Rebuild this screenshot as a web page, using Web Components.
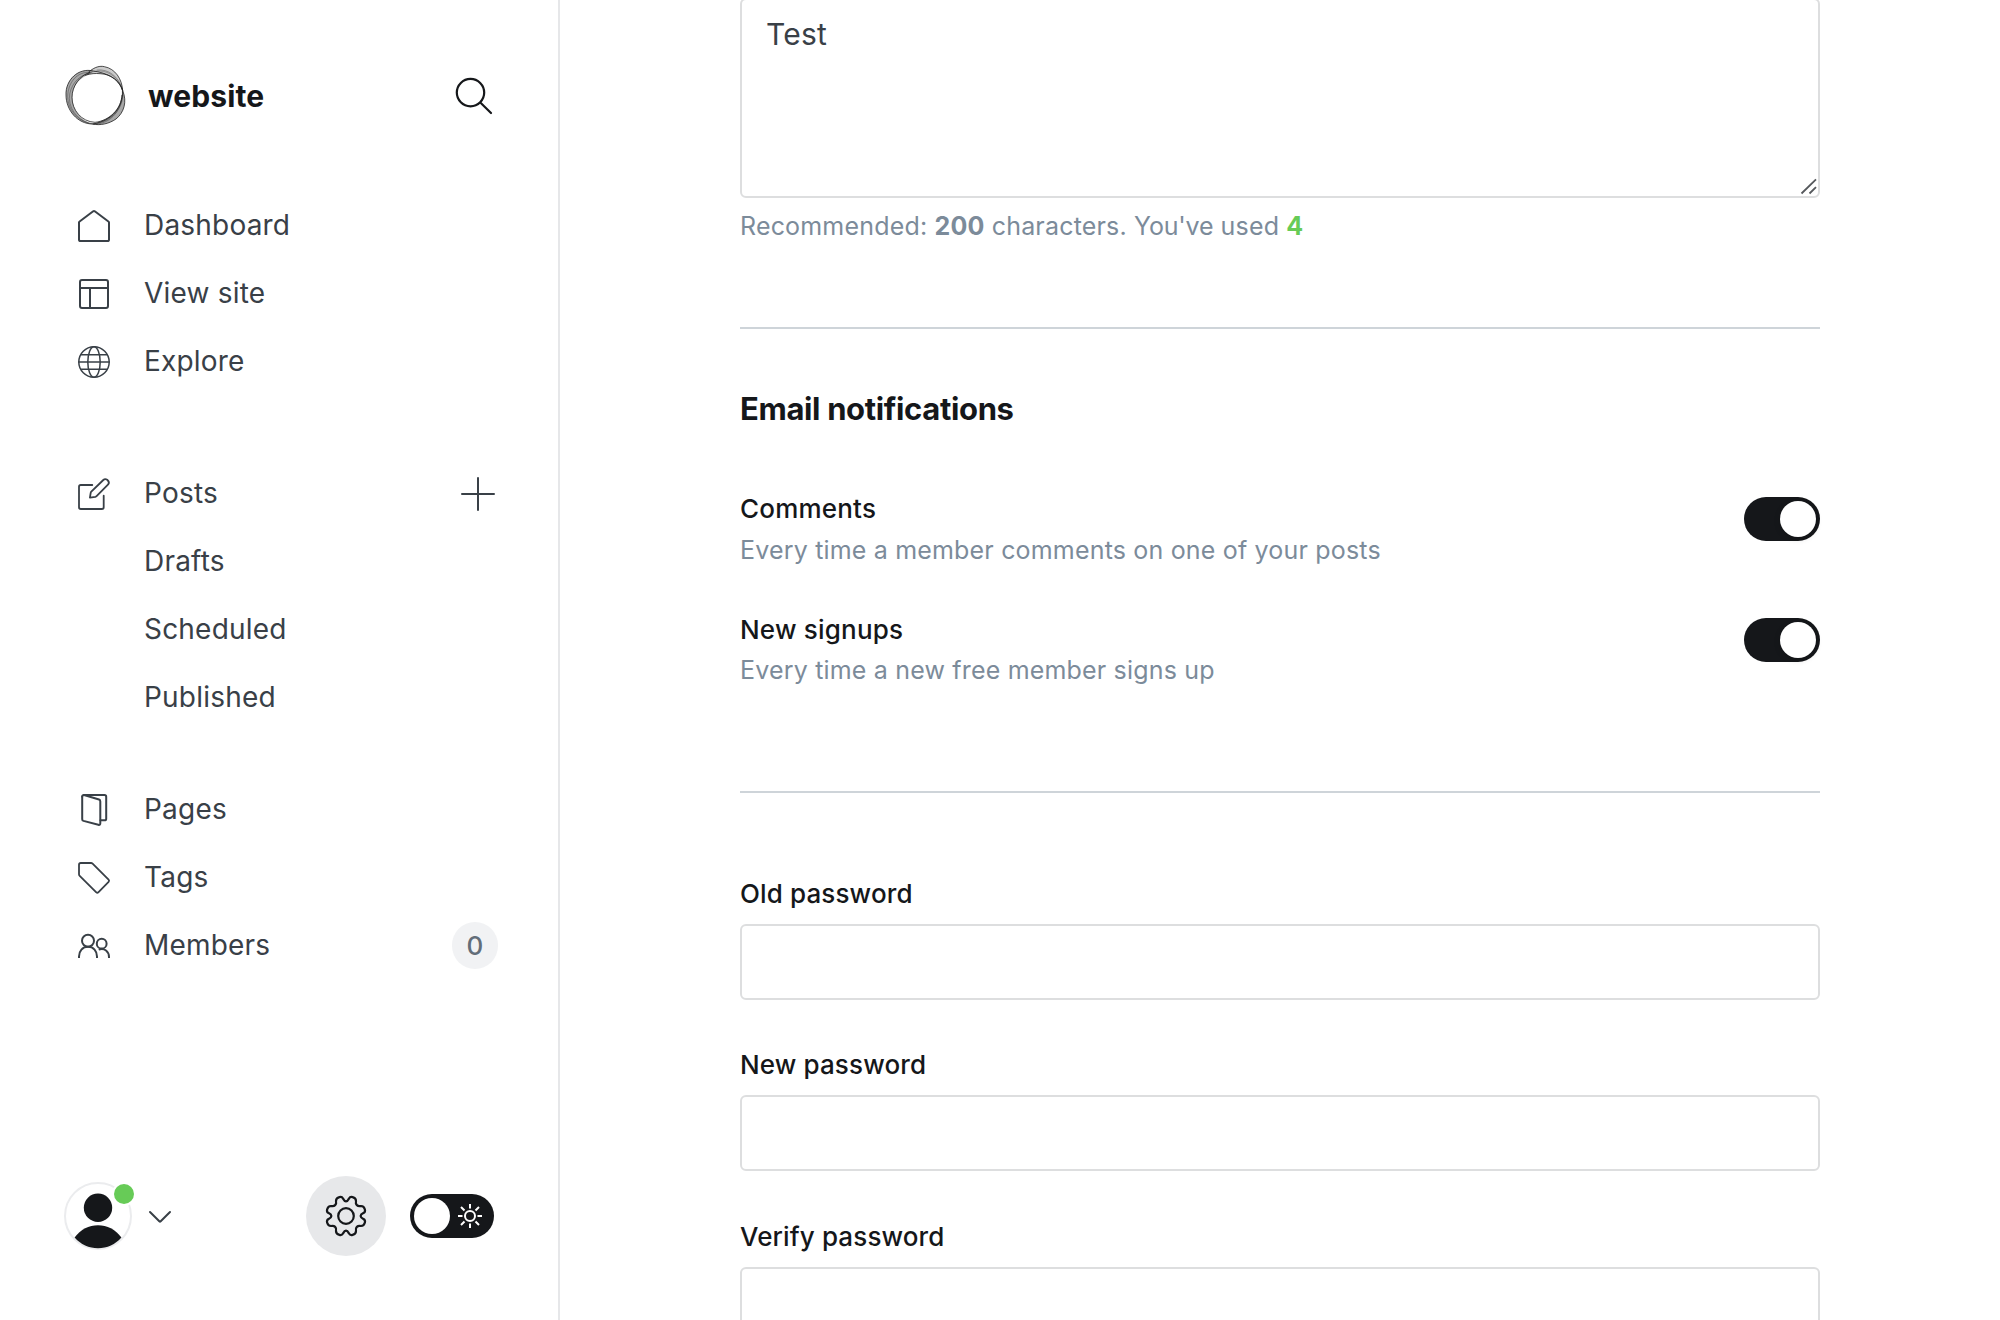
<!DOCTYPE html>
<html lang="en">
<head>
<meta charset="utf-8">
<title>Staff settings</title>
<style>
  html, body { margin: 0; height: 1320px; overflow: hidden; background: #fff; }
  body { font-family: Inter, "Liberation Sans", sans-serif; color: #15171a; }
</style>
</head>
<body>
<admin-app></admin-app>
<script>
const define = (name, html, setup) => {
  const template = document.createElement('template');
  template.innerHTML = `<style>*{box-sizing:border-box}svg{display:block;overflow:visible}</style>${html}`;
  customElements.define(name, class extends HTMLElement {
    constructor() {
      super();
      this.attachShadow({ mode: 'open' }).append(template.content.cloneNode(true));
    }
    connectedCallback() { if (setup) setup(this, this.shadowRoot); }
  });
};

/* Line icons, drawn in a 32px box */
const ICONS = {
  dashboard: '<path d="M1 12.6Q1 11.9 1.6 11.5L15.2 1.3Q16 .8 16.8 1.3L30.400 11.500Q31 11.900 31 12.600V29.400Q31 31 29.400 31H2.600Q1 31 1 29.400Z"/>',
  layout: '<rect x="2" y="2" width="28" height="28" rx="2"/><path d="M2 10H30M12 10V30"/>',
  globe: '<g stroke-width="1.5"><circle cx="16" cy="16" r="15.200"/><ellipse cx="16" cy="16" rx="6.200" ry="15.200"/><path d="M.800 16H31.200M3 8.700H29M3 23.300H29"/></g>',
  edit: '<g stroke-width="1.800"><path d="M14.300 7H2.700Q1 7 1 8.700V29.300Q1 31 2.700 31H24Q25.700 31 25.700 29.300V17.700"/><path d="M11.900 19.600L12.700 14.800Q12.800 14.200 13.300 13.700L25.300 2Q27 .400 29.200 1.700Q32 4 30.200 6.400L18.600 18.100Q18.100 18.600 17.400 18.800Z"/></g>',
  pages: '<path d="M4.200 2.700Q4.200 1 6 1H26.500Q28.200 1 28.200 2.700V24.700Q28.200 26.300 26.500 26.300H22.500"/><path d="M6 1L21 5.500Q22.300 6 22.300 7.400V29.300Q22.300 31.400 20.300 30.800L5.500 26.900Q4.200 26.500 4.200 25.200V2.700"/>',
  tag: '<path stroke-width="1.800" d="M2.700 1H13Q13.900 1 14.600 1.700L30.600 17.700Q31.600 18.800 30.600 19.800L20.300 30.300Q19.300 31.300 18.300 30.300L1.700 13.900Q1 13.200 1 12.300V2.700Q1 1 2.700 1Z"/>',
  members: '<g stroke-linecap="butt"><circle cx="10" cy="10.700" r="6"/><path d="M1 28V26.500C1 21 4.500 16.800 10 16.800S19 21 19 26.500V28"/><circle cx="23.700" cy="13.700" r="4.900"/><path d="M20.700 19.600C26.500 17.500 31 21.500 31 27V28"/></g>'
};

define('line-icon', `
  <style>:host{display:block;flex:none;width:32px;height:32px}</style>
  <svg width="32" height="32" viewBox="0 0 32 32" fill="none" stroke="#394047" stroke-width="2" stroke-linecap="round" stroke-linejoin="round"></svg>`,
  (host, root) => { root.querySelector('svg').innerHTML = ICONS[host.getAttribute('name')] || ''; });

define('nav-item', `
  <style>
    :host{display:flex;align-items:center;height:68px;padding-right:62px;color:#394047;
      font-size:28px;line-height:36px;letter-spacing:.2px}
    .icon{width:66px;padding-top:2px;flex:none}
    .label{flex:1}
  </style>
  <div class="icon"></div><span class="label"><slot></slot></span><slot name="end"></slot>`,
  (host, root) => {
    const name = host.getAttribute('icon');
    if (name) root.querySelector('.icon').innerHTML = `<line-icon name="${name}"></line-icon>`;
  });

define('nav-group', `
  <style>:host{display:flex;flex-direction:column}</style><slot></slot>`);

define('site-logo', `
  <style>:host{display:block;width:64px;height:64px}</style>
  <svg width="64" height="64" viewBox="42 42 192 192" fill="none">
    <g fill="#6c6c6c" fill-opacity=".6">
      <path d="M116 66C135 50 150 47 163 50C196 56 216 87 218 122C210 95 185 72 150 71C136 70 124 72 105 76Z" fill-opacity=".35"/>
      <path d="M218 122C232 155 222 188 198 207C176 222 150 227 128 222C165 212 210 190 216 142Z"/>
      <path d="M130 63C85 52 46 90 48 135C48 180 82 222 128 222C95 213 66 180 67 140C67 108 90 82 120 72Z"/>
    </g>
    <g stroke="#161616" stroke-opacity=".8" stroke-width="2.800">
      <path d="M116 66C135 50 150 47 163 50C196 56 216 87 218 122C232 155 222 188 198 207C176 222 150 227 128 222C82 222 48 180 48 135C46 90 85 52 130 63C165 68 205 82 218 122"/>
      <path d="M105 76C124 70 136 70 150 71C185 72 210 95 218 122C218 170 190 212 128 222"/>
      <path d="M120 67C90 76 66 108 66 142C66 180 94 215 135 217C180 212 214 175 216 135"/>
    </g>
    <g stroke="#222" stroke-opacity=".6" stroke-width="1.800">
      <path d="M122 67C80 64 54 98 53 140C54 182 86 217 130 221C176 220 224 180 218 122C208 86 180 64 150 63C136 63 124 66 112 72"/>
      <path d="M118 70C84 76 58 108 58 146C60 186 92 218 132 223C184 222 220 178 217 118C206 80 176 56 140 60"/>
    </g>
  </svg>`);

define('count-badge', `
  <style>:host{display:flex;align-items:center;justify-content:center;width:46px;height:47px;margin-right:-2px;padding-top:1px;
    border-radius:24px;background:#f1f2f4;color:#626d79;font-size:26px;font-weight:500;line-height:32px;letter-spacing:0}</style>
  <slot></slot>`);

define('user-avatar', `
  <style>:host{display:block;width:68px;height:68px}</style>
  <svg width="68" height="68" viewBox="0 0 68 68">
    <circle cx="34" cy="34" r="33" fill="#fff" stroke="#ebecee" stroke-width="2"/>
    <circle cx="34" cy="25.700" r="14.200" fill="#15171a"/>
    <path d="M10.600 55.500C16.500 47.500 25 43.300 34 43.300S51.500 47.500 57.400 55.500C51.500 62.500 43 66.200 34 66.200S16.500 62.500 10.600 55.500Z" fill="#15171a"/>
    <circle cx="60" cy="12" r="12" fill="#fff"/><circle cx="60" cy="12" r="10" fill="#67cb57"/>
  </svg>`);

define('gear-button', `
  <style>:host{display:flex;align-items:center;justify-content:center;width:80px;height:80px;border-radius:50%;background:#e7e8ea}</style>
  <svg width="40" height="40" viewBox="-20 -20 40 40" fill="none" stroke="#15171a" stroke-width="2.200" stroke-linejoin="round">
    <circle r="7.800"/>
    <path/>
  </svg>`,
  (host, root) => {
    /* One quadrant of the cog as bezier points, repeated four times */
    const q = [[0,-14.6],[1.5,-14.6],[2.1,-15.8],[3,-17.5],[3.9,-19.2],[5,-19.3],[6.6,-18.9],[8.6,-18.4],[10,-17.4],[10,-15],
      [9.2,-11.4],[11.4,-9.2],[15,-10],[17.4,-10],[18.4,-8.6],[18.9,-6.6],[19.3,-5],[19.2,-3.9],[17.5,-3],[15.8,-2.1],[14.6,-1.5],[14.6,0]];
    let d = `M${q[0]}`, pts = q.slice(1);
    for (let k = 0; k < 4; k++) {
      for (let i = 0; i < pts.length; i += 3) d += 'C' + pts.slice(i, i + 3).join(' ');
      pts = pts.map(([x, y]) => [-y, x]);
    }
    root.querySelector('path').setAttribute('d', d + 'Z');
  });

define('theme-toggle', `
  <style>:host{display:flex;align-items:center;justify-content:space-between;width:84px;height:44px;padding:0 12px 0 4px;border-radius:22px;background:#15171a}
  i{width:36px;height:36px;border-radius:50%;background:#fff}</style>
  <i></i>
  <svg width="24" height="24" viewBox="-12 -12 24 24" fill="none" stroke="#fff" stroke-width="2">
    <circle r="5"/><path d="M0-12V-7.500M0 7.500V12M-12 0H-7.500M7.500 0H12M-9-9L-5.500-5.500M9-9L5.500-5.500M-9 9L-5.500 5.500M9 9L5.500 5.500"/>
  </svg>`);

define('side-bar', `
  <style>
    :host{display:flex;flex-direction:column;width:560px;height:1320px;flex:none;border-right:2px solid #e6e7e9;padding:64px 0 64px 78px}
    header{display:flex;align-items:center;height:64px;margin-left:-14px;padding-right:66px}
    h1{flex:1;margin:0 0 0 20px;font-size:30px;line-height:40px;font-weight:700;letter-spacing:.12px}
    nav{display:flex;flex-direction:column;gap:64px;margin-top:63px}
    nav-group + nav-group + nav-group{margin-top:-20px}
    footer{display:flex;align-items:center;height:80px;margin:auto 64px 0 -14px}
    .caret{flex:1;margin-left:17px;padding-top:1px}
    theme-toggle{margin-left:24px}
  </style>
  <header>
    <site-logo></site-logo><h1>website</h1>
    <svg width="36" height="36" viewBox="0 0 36 36" fill="none" stroke="#15171a" stroke-width="2.200" stroke-linecap="round">
      <circle cx="14.500" cy="14.600" r="13.700"/><path d="M24.800 25L35 35"/>
    </svg>
  </header>
  <nav>
    <nav-group>
      <nav-item icon="dashboard">Dashboard</nav-item>
      <nav-item icon="layout">View site</nav-item>
      <nav-item icon="globe">Explore</nav-item>
    </nav-group>
    <nav-group>
      <nav-item icon="edit">Posts
        <svg slot="end" width="34" height="34" viewBox="0 0 34 34" fill="none" stroke="#394047" stroke-width="2" stroke-linecap="round" style="margin-top:2px;margin-right:1px"><path d="M17 1V33M1 17H33"/></svg>
      </nav-item>
      <nav-item>Drafts</nav-item>
      <nav-item>Scheduled</nav-item>
      <nav-item>Published</nav-item>
    </nav-group>
    <nav-group>
      <nav-item icon="pages">Pages</nav-item>
      <nav-item icon="tag">Tags</nav-item>
      <nav-item icon="members">Members<count-badge slot="end">0</count-badge></nav-item>
    </nav-group>
  </nav>
  <footer>
    <user-avatar></user-avatar>
    <div class="caret"><svg width="22" height="12" viewBox="0 0 22 12" fill="none" stroke="#394047" stroke-width="2" stroke-linecap="round" stroke-linejoin="round"><path d="M1 1L10.300 10.300Q11 11 11.700 10.300L21 1"/></svg></div>
    <gear-button></gear-button>
    <theme-toggle></theme-toggle>
  </footer>`);

define('text-area', `
  <style>
    :host{display:flex;flex-direction:column;justify-content:space-between;flex:none;height:200px;margin-top:-2px;padding:14px 2px 2px 24px;
      border:2px solid #dddedf;border-radius:6px;color:#394047;font-size:30px;line-height:40px;letter-spacing:.2px}
    svg{align-self:flex-end}
  </style>
  <div><slot></slot></div>
  <svg width="16" height="16" viewBox="0 0 16 16" fill="none" stroke="#55585c" stroke-width="1.800"><path d="M1.500 15.500L16 1.300M9.500 15.500L16 9.200"/></svg>`);

define('hint-text', `
  <style>:host{display:block;flex:none;color:#7c8b9a;font-size:25px;line-height:32px;letter-spacing:.18px}
  ::slotted(b){font-weight:700}</style><slot></slot>`);

define('toggle-switch', `
  <style>:host{display:flex;align-items:center;justify-content:flex-end;width:76px;height:44px;padding:0 4px;border-radius:22px;background:#15171a}
  i{width:36px;height:36px;border-radius:50%;background:#fff;box-shadow:0 2px 6px rgba(0,0,0,.15)}</style><i></i>`);

define('notify-row', `
  <style>
    :host{display:flex;justify-content:space-between;align-items:flex-start;height:121px}
    .title{font-size:26px;font-weight:500;line-height:36px;letter-spacing:.2px;margin-bottom:7px}
    :host(:last-of-type) .title{margin-bottom:6px}
    toggle-switch{margin-top:6px}
  </style>
  <div><div class="title"><slot name="title"></slot></div><hint-text><slot></slot></hint-text></div>
  <toggle-switch></toggle-switch>`);

define('password-field', `
  <style>
    :host{display:flex;flex-direction:column;height:171.400px}
    label{font-size:26px;font-weight:500;line-height:36px;letter-spacing:.13px}
    .box{height:76px;margin-top:12px;border:2px solid #dddedf;border-radius:6px}
  </style>
  <label><slot></slot></label><div class="box"></div>`);

define('settings-pane', `
  <style>
    :host{display:flex;flex-direction:column;flex:1;height:1320px;overflow:hidden;padding:0 180px}
    .hint{margin-top:12px}
    hr{width:100%;height:2px;margin:0;border:0;background:#ced4d9;flex:none}
    .first{margin-top:85px}
    h2{flex:none;margin:60px 0 0;font-size:31px;line-height:40px;font-weight:700;letter-spacing:-.35px}
    .rows{flex:none;margin-top:62px;height:300px}
    .fields{flex:none;margin-top:83px}
  </style>
  <text-area>Test</text-area>
  <hint-text class="hint">Recommended: <b>200</b> characters. <span style="letter-spacing:-.2px">You've</span> used <b style="color:#67cb57">4</b></hint-text>
  <hr class="first">
  <h2>Email notifications</h2>
  <div class="rows">
    <notify-row><span slot="title">Comments</span>Every time a member comments on one of your posts</notify-row>
    <notify-row><span slot="title">New signups</span>Every time a new free member signs up</notify-row>
  </div>
  <hr>
  <div class="fields">
    <password-field>Old password</password-field>
    <password-field>New password</password-field>
    <password-field>Verify password</password-field>
  </div>`);

define('admin-app', `
  <style>:host{display:flex;width:2000px;height:1320px;overflow:hidden;background:#fff}</style>
  <side-bar></side-bar><settings-pane></settings-pane>`);
</script>
</body>
</html>
